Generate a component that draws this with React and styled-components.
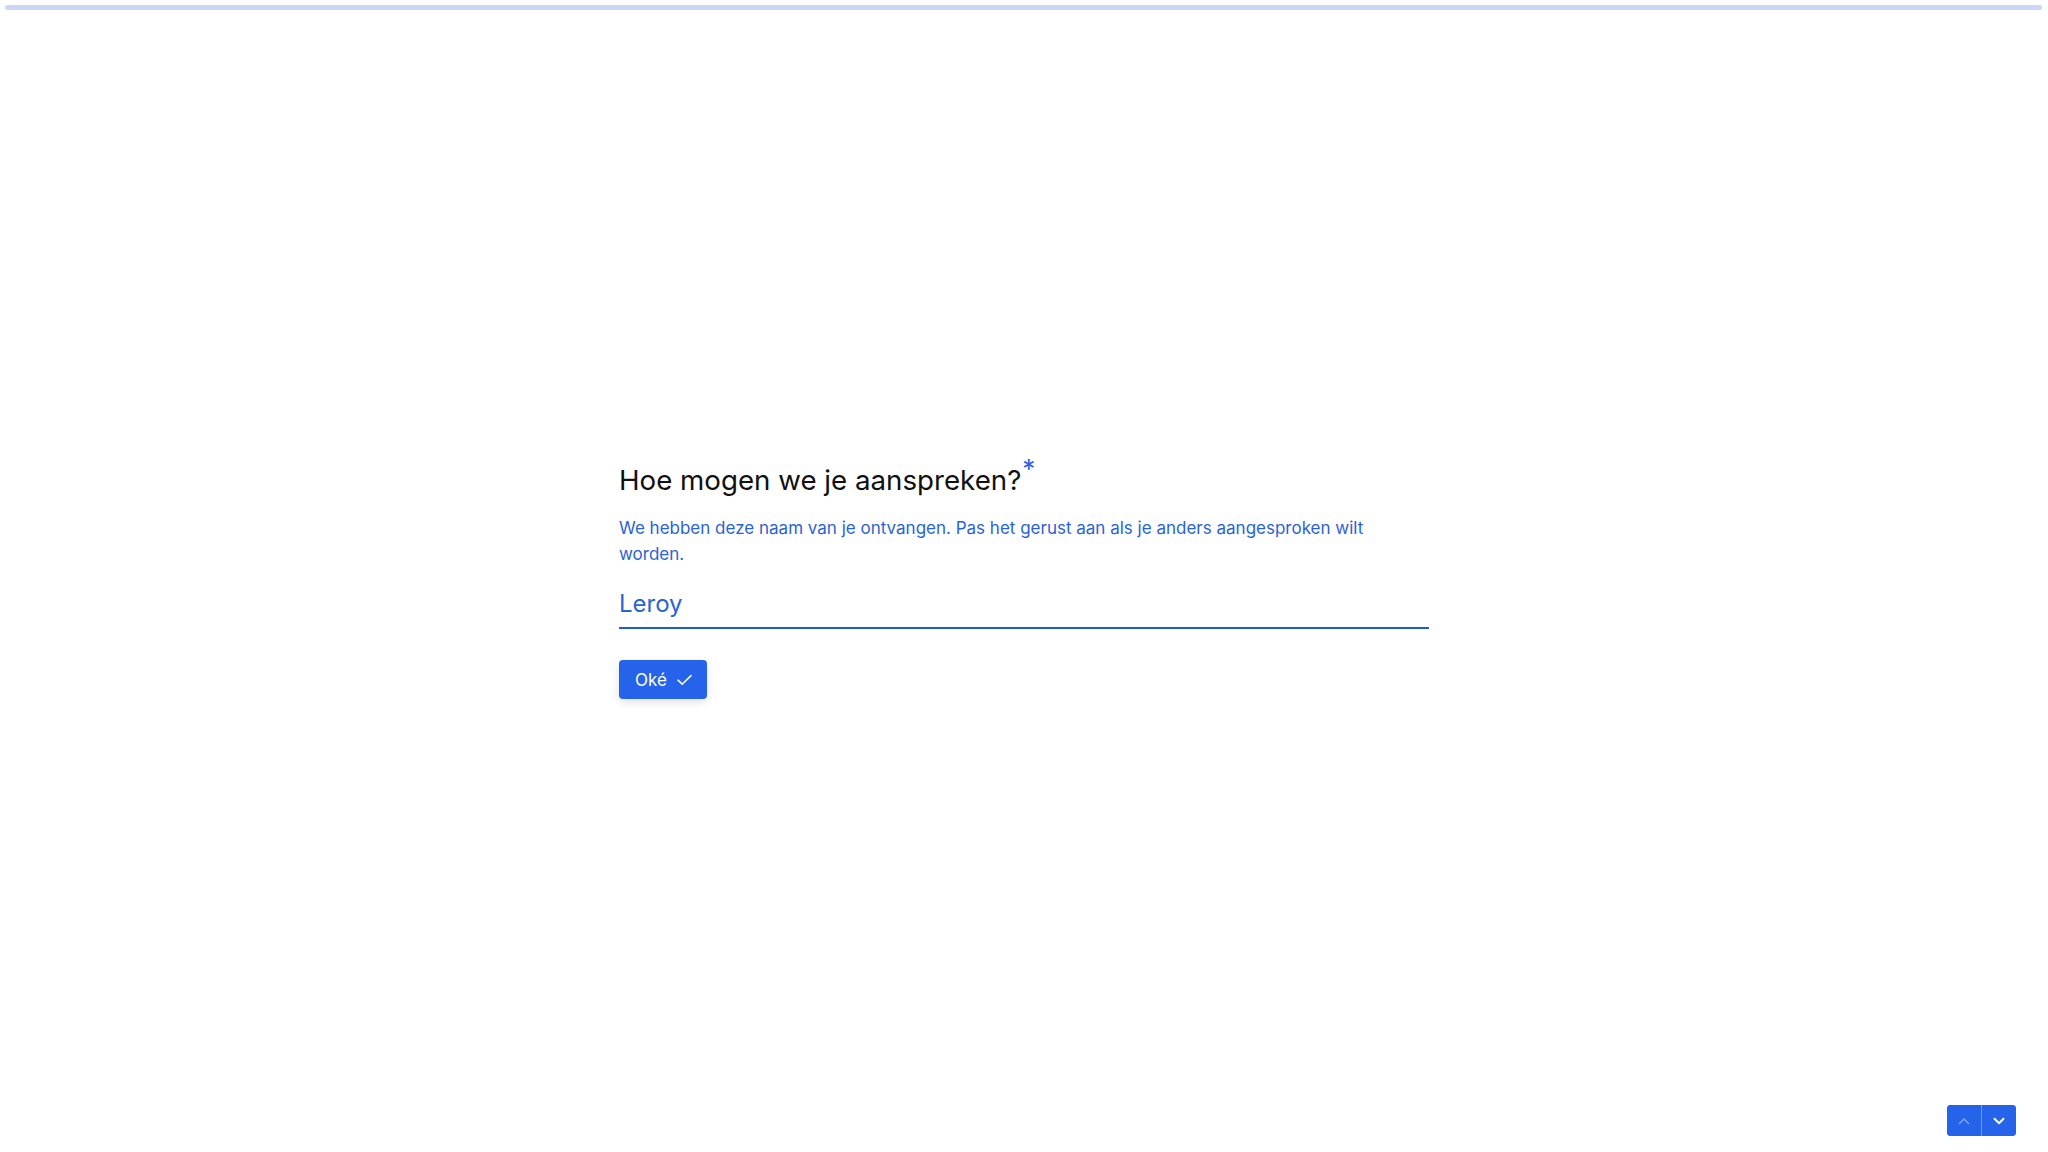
import React, { useState } from "react";
import styled, { createGlobalStyle } from "styled-components";

const GlobalStyle = createGlobalStyle`
  html, body {
    margin: 0;
    padding: 0;
    background: #ffffff;
    font-family: Inter, "Noto Sans", "Liberation Sans", sans-serif;
  }
  * { box-sizing: border-box; }
`;

const Page = styled.div`
  position: relative;
  min-height: 100vh;
  display: flex;
  align-items: center;
  justify-content: center;
`;

const Progress = styled.div`
  position: absolute;
  top: 5px;
  left: 5px;
  right: 6px;
  height: 5px;
  border-radius: 3px;
  background: #c9d8f8;
`;

const Question = styled.section`
  width: 810px;
  display: flex;
  flex-direction: column;
  margin-top: 9px;
`;

const Title = styled.h1`
  margin: 0;
  font-size: 27.7px;
  font-weight: 400;
  line-height: 36px;
  color: #111111;
  letter-spacing: 0;
`;

const Required = styled.sup`
  color: #2563eb;
  font-size: 26px;
  vertical-align: top;
  position: relative;
  top: -11px;
  margin-left: 1px;
`;

const Description = styled.p`
  margin: 17px 0 0;
  max-width: 780px;
  font-size: 17px;
  line-height: 26px;
  color: #2a63d6;
`;

const Field = styled.input`
  margin-top: 21px;
  width: 100%;
  border: none;
  border-bottom: 2px solid #2158e0;
  padding: 0 0 7px;
  font-family: inherit;
  font-size: 24px;
  line-height: 32px;
  color: #2a63d6;
  background: transparent;
  outline: none;
`;

const Actions = styled.div`
  margin-top: 31px;
  display: flex;
`;

const OkButton = styled.button`
  display: inline-flex;
  align-items: center;
  gap: 10px;
  height: 39px;
  padding: 0 15px 0 16px;
  border: none;
  border-radius: 4px;
  background: #2563eb;
  color: #ffffff;
  font-family: inherit;
  font-size: 17px;
  font-weight: 400;
  box-shadow: 0 3px 10px rgba(0, 0, 0, 0.12);
  cursor: pointer;
`;

const Nav = styled.div`
  position: absolute;
  right: 32px;
  bottom: 16px;
  display: flex;
  border-radius: 4px;
  overflow: hidden;
  background: #2563eb;
`;

const NavButton = styled.button`
  width: 34px;
  height: 31px;
  border: none;
  padding: 0;
  display: flex;
  align-items: center;
  justify-content: center;
  background: #2563eb;
  color: ${(p) => (p.$disabled ? "rgba(255,255,255,0.45)" : "#ffffff")};
  cursor: ${(p) => (p.$disabled ? "default" : "pointer")};
  & + & {
    border-left: 1px solid rgba(255, 255, 255, 0.35);
    width: 35px;
  }
`;

const Check = () => (
  <svg width="15" height="12" viewBox="0 0 15 12" fill="none">
    <path d="M1 6.2L5.2 10.2L14 1.6" stroke="currentColor" strokeWidth="1.6" strokeLinecap="round" strokeLinejoin="round" />
  </svg>
);

const Chevron = ({ up, weight }) => (
  <svg width="12" height="8" viewBox="0 0 12 8" fill="none">
    <path
      d={up ? "M1.5 6.5L6 2L10.5 6.5" : "M1.5 1.8L6 6.2L10.5 1.8"}
      stroke="currentColor"
      strokeWidth={weight}
      strokeLinecap="round"
      strokeLinejoin="round"
    />
  </svg>
);

export default function App() {
  const [name, setName] = useState("Leroy");
  return (
    <>
      <GlobalStyle />
      <Page>
        <Progress />
        <Question>
          <Title>
            Hoe mogen we je aanspreken?<Required>*</Required>
          </Title>
          <Description>
            We hebben deze naam van je ontvangen. Pas het gerust aan als je anders aangesproken wilt worden.
          </Description>
          <Field value={name} onChange={(e) => setName(e.target.value)} />
          <Actions>
            <OkButton>
              Oké <Check />
            </OkButton>
          </Actions>
        </Question>
        <Nav>
          <NavButton $disabled aria-label="Vorige">
            <Chevron up weight={1.4} />
          </NavButton>
          <NavButton aria-label="Volgende">
            <Chevron weight={2} />
          </NavButton>
        </Nav>
      </Page>
    </>
  );
}
